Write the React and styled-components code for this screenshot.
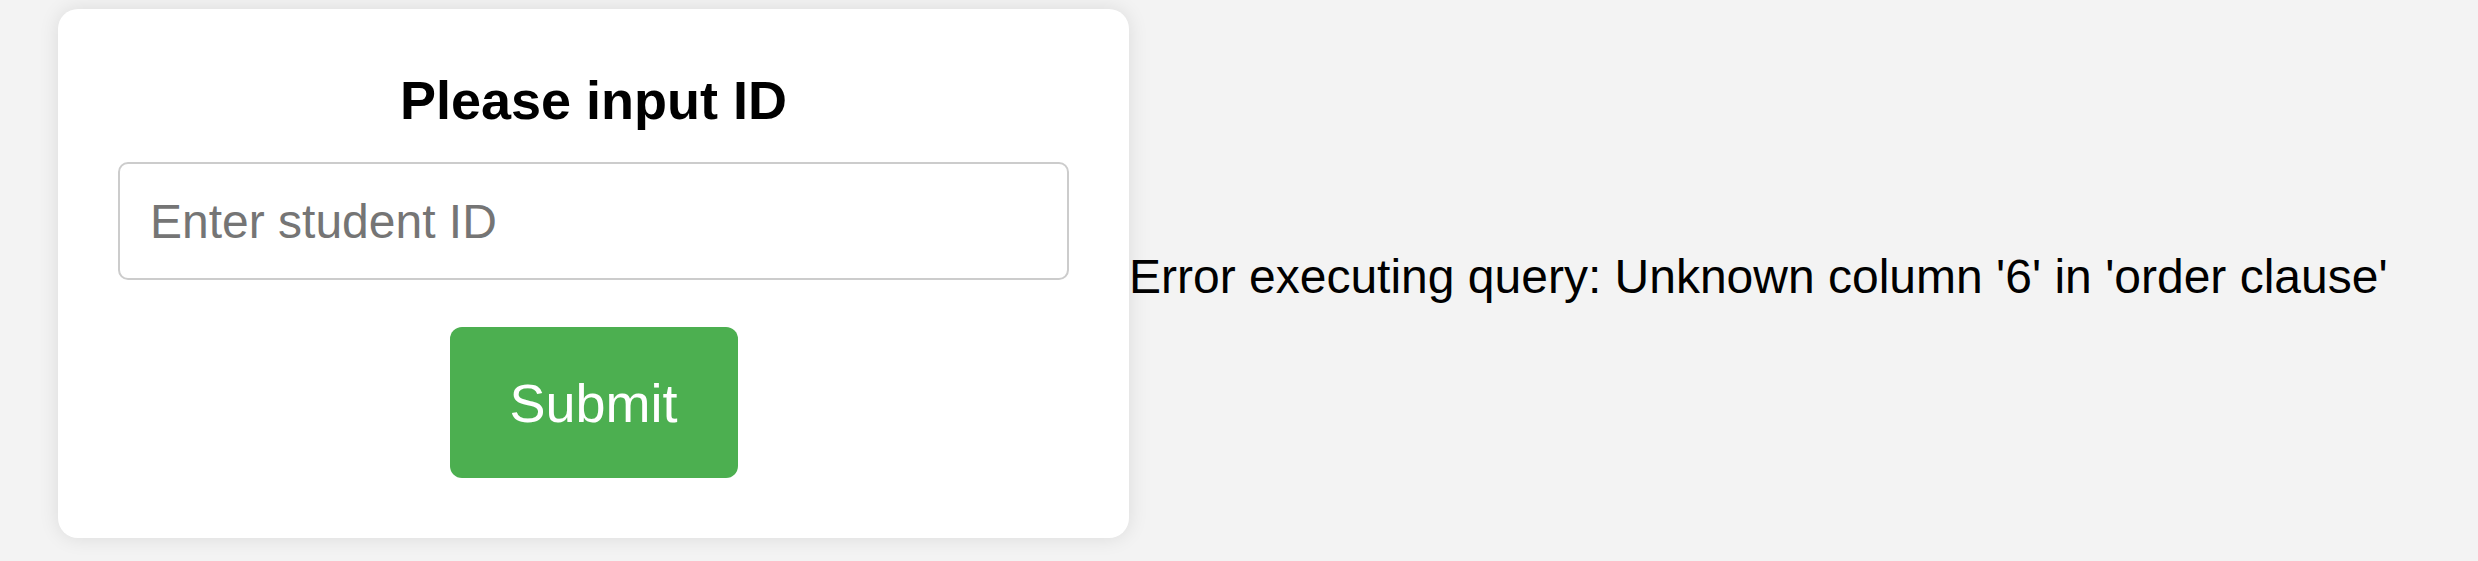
import styled, { createGlobalStyle } from "styled-components";

const GlobalStyle = createGlobalStyle`
  body {
    margin: 0;
    background-color: #f3f3f3;
    font-family: "Liberation Sans", Arial, sans-serif;
  }
`;

const Page = styled.div`
  display: flex;
  align-items: center;
  padding: 9px 0 23px 58px;
`;

const Card = styled.form`
  width: 1071px;
  box-sizing: border-box;
  padding: 60px;
  background-color: #ffffff;
  border-radius: 20px;
  box-shadow: 0 0 20px rgba(0, 0, 0, 0.1);
  display: flex;
  flex-direction: column;
  align-items: center;
`;

const Title = styled.h2`
  margin: 0 0 31px;
  font-size: 54px;
  font-weight: 700;
  color: #000;
`;

const Input = styled.input`
  width: 100%;
  height: 118px;
  box-sizing: border-box;
  padding: 0 30px;
  border: 2px solid #ccc;
  border-radius: 10px;
  font-family: inherit;
  font-size: 48px;
  outline: none;

  &::placeholder {
    color: #757575;
  }
`;

const Button = styled.button`
  margin-top: 47px;
  width: 288px;
  height: 151px;
  border: none;
  border-radius: 12px;
  background-color: #4caf50;
  color: #fff;
  font-family: inherit;
  font-size: 54px;
  cursor: pointer;
`;

const ErrorText = styled.p`
  margin: 6px 0 0;
  font-size: 48px;
  color: #000;
`;

export default function App() {
  return (
    <>
      <GlobalStyle />
      <Page>
        <Card onSubmit={(e) => e.preventDefault()}>
          <Title>Please input ID</Title>
          <Input type="text" placeholder="Enter student ID" />
          <Button type="submit">Submit</Button>
        </Card>
        <ErrorText>
          Error executing query: Unknown column '6' in 'order clause'
        </ErrorText>
      </Page>
    </>
  );
}
